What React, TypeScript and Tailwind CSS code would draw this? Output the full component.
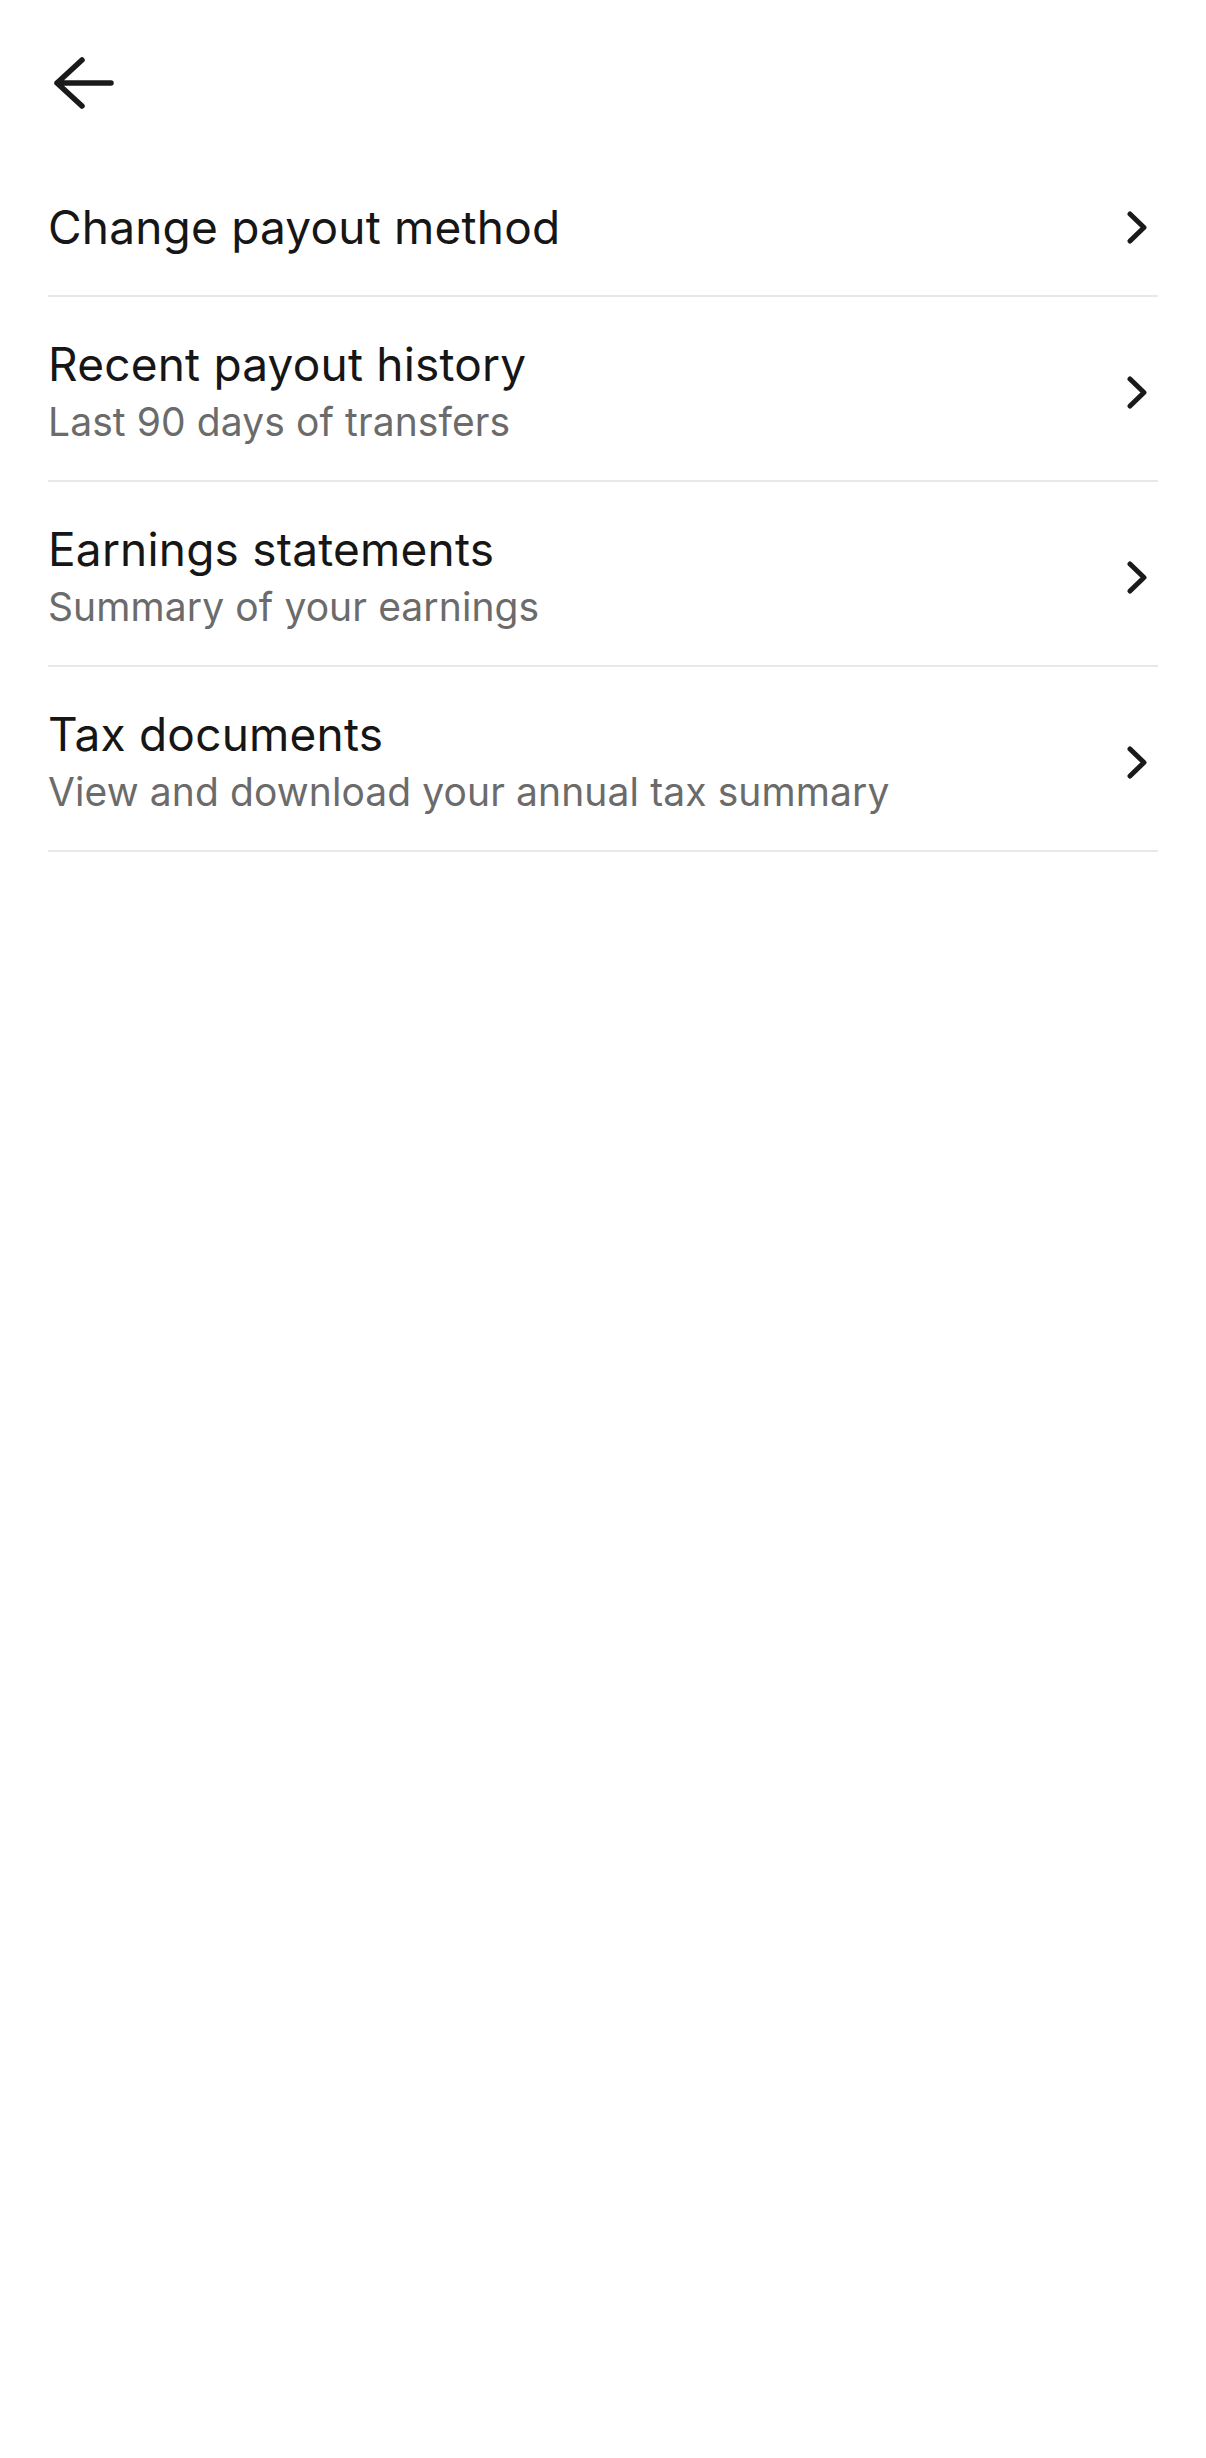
import React from "react";

const rows = [
  { title: "Change payout method" },
  { title: "Recent payout history", sub: "Last 90 days of transfers" },
  { title: "Earnings statements", sub: "Summary of your earnings" },
  { title: "Tax documents", sub: "View and download your annual tax summary" },
];

function Chevron() {
  return (
    <svg width="20" height="33" viewBox="0 0 20 33" fill="none" className="shrink-0">
      <path d="M3 3 L17 16.5 L3 30" stroke="#1a1a1a" strokeWidth="5" strokeLinecap="round" strokeLinejoin="round" />
    </svg>
  );
}

function BackArrow() {
  return (
    <svg width="70" height="60" viewBox="0 0 70 60" fill="none">
      <path d="M9 30 H63 M34 7 L9 30 L34 53" stroke="#1a1a1a" strokeWidth="5.5" strokeLinecap="round" strokeLinejoin="round" />
    </svg>
  );
}

export default function App() {
  return (
    <div className="min-h-screen w-full bg-white" style={{ fontFamily: "Inter, 'Noto Sans', sans-serif" }}>
      <div className="px-[48px] pt-[53px]">
        <button className="block h-[60px] w-[70px]">
          <BackArrow />
        </button>
        <ul className="mt-[47px]">
          {rows.map((r, i) => (
            <li
              key={i}
              className={`flex items-center justify-between border-b-2 border-[#e8e8e8] pt-[37px] ${r.sub ? "pb-[30px]" : "pb-[38px]"}`}
            >
              <div className="flex flex-col">
                <span className="text-[46px] leading-[60px] font-normal text-[#161616] tracking-[0.2px]">{r.title}</span>
                {r.sub && (
                  <span className="text-[39px] leading-[56px] text-[#6b6b6b] tracking-[0.1px]">{r.sub}</span>
                )}
              </div>
              <div className="mr-[11px]">
                <Chevron />
              </div>
            </li>
          ))}
        </ul>
      </div>
    </div>
  );
}
